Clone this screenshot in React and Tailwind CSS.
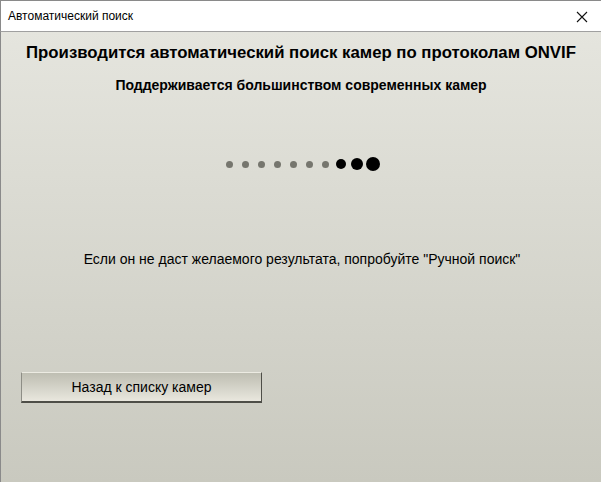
import React from "react";

export default function App() {
  const small = [0, 1, 2, 3, 4, 5, 6];
  return (
    <div
      className="w-[601px] h-[482px] flex flex-col overflow-hidden"
      style={{ fontFamily: '"Liberation Sans", Arial, sans-serif' }}
    >
      <div className="h-[32px] shrink-0 bg-white border-t border-l border-[#8a8a8a] border-b border-b-[#a0a0a0] flex items-center justify-between pl-[7px] pr-[13px]">
        <span className="text-[12px] text-black">Автоматический поиск</span>
        <svg width="12" height="12" viewBox="0 0 12 12" className="mt-[1px]">
          <path d="M1 1 L11 11 M11 1 L1 11" stroke="#111" strokeWidth="1.1" />
        </svg>
      </div>
      <div className="flex-1 border-l border-[#8a8a8a] bg-gradient-to-b from-[#e5e5de] to-[#c9c9bf] flex flex-col">
        <div className="pt-[11px] text-center text-[16.75px] font-bold text-black leading-[20px]">
          Производится автоматический поиск камер по протоколам ONVIF
        </div>
        <div className="pt-[14px] text-center text-[14px] font-bold text-black leading-[17px]">
          Поддерживается большинством современных камер
        </div>
        <div className="mt-[62px] h-[16px] flex items-center pl-[220px]">
          {small.map((i) => (
            <div key={i} className="w-[16px] flex justify-center">
              <div className="w-[7px] h-[7px] rounded-full bg-[#76766e]" />
            </div>
          ))}
          <div className="w-[16px] flex justify-center">
            <div className="w-[10px] h-[10px] rounded-full bg-black" />
          </div>
          <div className="w-[16px] flex justify-center">
            <div className="w-[12px] h-[12px] rounded-full bg-black" />
          </div>
          <div className="w-[16px] flex justify-center">
            <div className="w-[14px] h-[14px] rounded-full bg-black" />
          </div>
        </div>
        <div className="mt-[78px] text-center text-[14px] text-black leading-[18px] pl-[2px]">
          Если он не даст желаемого результата, попробуйте "Ручной поиск"
        </div>
        <div className="mt-[104px] pl-[20px]">
          <button className="w-[241px] h-[31px] border border-t-[#ecebe2] border-l-[#8e8e86] border-r-[#4e4e48] border-b-[#4e4e48] border-b-2 bg-gradient-to-b from-[#bebeb2] to-[#e9e7de] text-[14px] text-black flex items-center justify-center">
            Назад к списку камер
          </button>
        </div>
      </div>
    </div>
  );
}
